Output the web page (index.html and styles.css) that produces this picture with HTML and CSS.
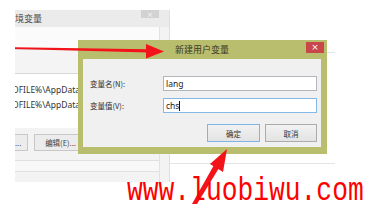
FILE: index.html
```html
<!DOCTYPE html>
<html lang="zh-CN">
<head>
<meta charset="utf-8">
<title>新建用户变量</title>
<link rel="stylesheet" href="styles.css">
</head>
<body>
<div class="desk">
  <div class="shadow-win"></div>

  <div class="bgwin">
    <div class="bg-title">
      <span class="bg-title-text">境变量</span>
      <span class="bg-close">×</span>
    </div>
    <div class="bg-body">
      <div class="bg-panel"></div>
      <div class="bg-head"></div>
      <div class="bg-list">
        <div class="bg-row">OFILE%\AppData\</div>
        <div class="bg-row">OFILE%\AppData\</div>
      </div>
      <div class="bg-buttons">
        <span class="bg-btn bg-btn-cut">...</span>
        <span class="bg-btn">编辑(E)...</span>
        <span class="bg-btn"></span>
      </div>
      <div class="bg-list2"></div>
    </div>
  </div>

  <div class="dlg">
    <div class="dlg-title">新建用户变量</div>
    <span class="dlg-close">×</span>
    <div class="dlg-body">
      <div class="field">
        <span class="label">变量名(N):</span>
        <span class="input">lang</span>
      </div>
      <div class="field">
        <span class="label">变量值(V):</span>
        <span class="input input-focus">chs<i class="caret"></i></span>
      </div>
      <div class="actions">
        <span class="btn btn-default">确定</span>
        <span class="btn">取消</span>
      </div>
    </div>
  </div>

  <svg class="arrows" width="371" height="204" viewBox="0 0 371 204">
    <polygon points="15,47.3 148,49.2 148,52.6 15,48.9" fill="#f2141a"/>
    <polygon points="146,44 164,51.6 146,58.5" fill="#f2141a"/>
    <polygon points="192,204 214,165 219,168 197,204" fill="#f2141a"/>
    <polygon points="227,149 210,164 223,172" fill="#f2141a"/>
  </svg>

  <div class="watermark">www.luobiwu.com</div>
</div>
</body>
</html>
```

FILE: styles.css
```css
html, body {
  margin: 0;
  padding: 0;
  background: #ffffff;
}

.desk {
  position: relative;
  width: 371px;
  height: 204px;
  overflow: hidden;
  background: #ffffff;
  font-family: "Noto Sans CJK SC", "Noto Sans", sans-serif;
}

/* faint window behind the dialog */
.shadow-win {
  position: absolute;
  left: 170px;
  top: 52px;
  width: 165px;
  height: 110px;
  border-top: 1px solid #e4e4e4;
  border-bottom: 1px solid #e4e4e4;
}

/* background "environment variables" window */
.bgwin {
  position: absolute;
  left: 15px;
  top: 10px;
  width: 154px;
  height: 172px;
  background: #f3f3f3;
  border-right: 1px solid #dedede;
  display: flex;
  flex-direction: column;
  overflow: hidden;
}

.bg-title {
  height: 17px;
  flex: none;
  display: flex;
  align-items: center;
  background: #ebebeb;
  color: #4a4a4a;
  font-size: 9px;
}

.bg-title-text {
  line-height: 1;
}

.bg-close {
  margin-left: auto;
  margin-right: 10px;
  align-self: flex-start;
  width: 18px;
  height: 8px;
  background: #d2d2d2;
  color: #ffffff;
  font-size: 7px;
  line-height: 8px;
  text-align: center;
}

.bg-body {
  flex: 1;
  display: flex;
  flex-direction: column;
  margin-right: 9px;
  border-right: 1px solid #e2e2e2;
}

.bg-panel {
  height: 22px;
  background: #fbfbfb;
  border-bottom: 1px solid #dcdcdc;
}

.bg-head {
  height: 23px;
  border-bottom: 1px solid #d8d8d8;
  background: #f4f4f4;
}

.bg-list {
  height: 54px;
  background: #ffffff;
  padding-top: 10px;
  box-sizing: border-box;
  display: flex;
  flex-direction: column;
  gap: 3px;
}

.bg-row {
  width: 63px;
  overflow: hidden;
  font-family: "Noto Sans", "Noto Sans CJK SC", sans-serif;
  font-size: 8.5px;
  line-height: 12px;
  color: #333333;
  white-space: nowrap;
  text-indent: -3px;
}

.bg-buttons {
  display: flex;
  gap: 6px;
  margin-top: 6px;
  height: 17px;
}

.bg-btn {
  width: 51px;
  height: 15px;
  flex: none;
  border: 1px solid #c8c8c8;
  background: #ececec;
  font-size: 7.5px;
  color: #444;
  display: flex;
  align-items: center;
  justify-content: center;
}

.bg-btn-cut {
  width: 12px;
  border-left: none;
  justify-content: flex-start;
}

.bg-list2 {
  margin-top: 9px;
  height: 10px;
  border-top: 1px solid #e0e0e0;
  border-bottom: 1px solid #e0e0e0;
  background: #f8f8f8;
}

/* foreground dialog */
.dlg {
  position: absolute;
  left: 78px;
  top: 40px;
  width: 249px;
  height: 114px;
  box-sizing: border-box;
  padding: 0 6px 7px 5px;
  background: #b9be6e;
  display: flex;
  flex-direction: column;
  z-index: 2;
}

.dlg-title {
  height: 19px;
  flex: none;
  display: flex;
  align-items: center;
  justify-content: center;
  font-size: 9px;
  color: #3a3a2a;
}

.dlg-close {
  position: absolute;
  top: 2px;
  right: 3px;
  width: 18px;
  height: 11px;
  background: #c9464b;
  color: #ffffff;
  font-family: "DejaVu Sans", sans-serif;
  font-size: 9px;
  line-height: 11px;
  text-align: center;
}

.dlg-body {
  flex: 1;
  background: #f0f0f0;
  padding: 17px 4px 0 7px;
  display: flex;
  flex-direction: column;
  gap: 7px;
}

.field {
  display: flex;
  align-items: center;
  height: 15px;
}

.label {
  width: 73px;
  flex: none;
  font-size: 7.5px;
  color: #2e2e2e;
}

.input {
  flex: 1;
  height: 15px;
  box-sizing: border-box;
  border: 1px solid #b4b6bb;
  background: #ffffff;
  font-family: "Noto Sans", sans-serif;
  font-size: 8.5px;
  line-height: 13px;
  padding-left: 2px;
  color: #222;
  display: flex;
  align-items: center;
}

.input-focus {
  border-color: #86b7e6;
}

.caret {
  display: inline-block;
  width: 1px;
  height: 10px;
  background: #111;
}

.actions {
  display: flex;
  justify-content: flex-end;
  gap: 5px;
  margin-top: 4px;
}

.btn {
  width: 52px;
  height: 18px;
  box-sizing: border-box;
  border: 1px solid #acacac;
  background: linear-gradient(#f2f2f2, #e3e3e3);
  font-size: 7.5px;
  color: #333;
  display: flex;
  align-items: center;
  justify-content: center;
}

.btn-default {
  width: 53px;
  border-color: #7fb4e6;
}

/* red annotations */
.arrows {
  position: absolute;
  left: 0;
  top: 0;
  z-index: 3;
}

.watermark {
  position: absolute;
  left: 127px;
  top: 180px;
  z-index: 4;
  font-family: "Liberation Mono", monospace;
  font-size: 26.3px;
  line-height: 26px;
  color: #ff0000;
  white-space: nowrap;
  transform: scaleY(1.25);
  transform-origin: 0 20px;
}
```
